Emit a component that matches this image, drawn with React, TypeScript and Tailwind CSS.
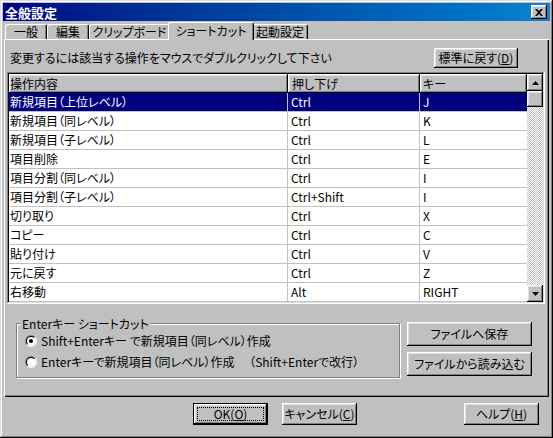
import { useId } from 'react'

const raised =
  'bg-[#c0c0c0] shadow-[inset_-1px_-1px_#000000,inset_1px_1px_#ffffff,inset_-2px_-2px_#808080,inset_2px_2px_#dfdfdf]'
const sunken =
  'shadow-[inset_-1px_-1px_#ffffff,inset_1px_1px_#808080,inset_-2px_-2px_#dfdfdf,inset_2px_2px_#000000]'

interface Shortcut {
  action: string
  modifier: string
  key: string
}

const shortcuts: Shortcut[] = [
  { action: '新規項目（上位レベル）', modifier: 'Ctrl', key: 'J' },
  { action: '新規項目（同レベル）', modifier: 'Ctrl', key: 'K' },
  { action: '新規項目（子レベル）', modifier: 'Ctrl', key: 'L' },
  { action: '項目削除', modifier: 'Ctrl', key: 'E' },
  { action: '項目分割（同レベル）', modifier: 'Ctrl', key: 'I' },
  { action: '項目分割（子レベル）', modifier: 'Ctrl+Shift', key: 'I' },
  { action: '切り取り', modifier: 'Ctrl', key: 'X' },
  { action: 'コピー', modifier: 'Ctrl', key: 'C' },
  { action: '貼り付け', modifier: 'Ctrl', key: 'V' },
  { action: '元に戻す', modifier: 'Ctrl', key: 'Z' },
  { action: '右移動', modifier: 'Alt', key: 'RIGHT' },
]

const tabs = [
  { label: '一般', w: 'w-[42px]' },
  { label: '編集', w: 'w-[42px]' },
  { label: 'クリップボード', w: 'w-[81px]' },
  { label: 'ショートカット', w: 'w-[86px]', active: true },
  { label: '起動設定', w: 'w-[56px]' },
]

function Radio({ checked }: { checked?: boolean }) {
  const id = useId().replace(/:/g, '')
  return (
    <svg width="12" height="12" viewBox="0 0 12 12" className="shrink-0">
      <defs>
        <linearGradient id={`o${id}`} x1="0" y1="0" x2="1" y2="1">
          <stop offset="0.5" stopColor="#808080" />
          <stop offset="0.5" stopColor="#ffffff" />
        </linearGradient>
        <linearGradient id={`i${id}`} x1="0" y1="0" x2="1" y2="1">
          <stop offset="0.5" stopColor="#000000" />
          <stop offset="0.5" stopColor="#dfdfdf" />
        </linearGradient>
      </defs>
      <circle cx="6" cy="6" r="6" fill={`url(#o${id})`} />
      <circle cx="6" cy="6" r="5" fill={`url(#i${id})`} />
      <circle cx="6" cy="6" r="4" fill="#ffffff" />
      {checked && <circle cx="6" cy="6" r="2" fill="#000000" />}
    </svg>
  )
}

function Arrow({ up }: { up?: boolean }) {
  return (
    <svg width="7" height="4" viewBox="0 0 7 4">
      <polygon points={up ? '3.5,0 7,4 0,4' : '0,0 7,0 3.5,4'} fill="#000000" />
    </svg>
  )
}

export default function App() {
  return (
    <div className="w-[553px] h-[438px] bg-[#c0c0c0] p-[3px] shadow-[inset_-1px_-1px_#000000,inset_1px_1px_#dfdfdf,inset_-2px_-2px_#808080,inset_2px_2px_#ffffff] font-['Noto_Sans_CJK_JP',sans-serif] [font-feature-settings:'palt'] text-[12px] text-black select-none">
      {/* title bar */}
      <div className="h-[18px] flex items-center justify-between pl-[2px] pr-[3px] bg-gradient-to-r from-[#000080] to-[#1084d0]">
        <span className="text-white font-bold text-[13px] leading-none">全般設定</span>
        <div className={`w-[16px] h-[14px] flex items-center justify-center ${raised}`}>
          <svg width="8" height="7" viewBox="0 0 8 7">
            <path d="M0 0h2l2 2 2-2h2L5 3.5 8 7H6L4 5 2 7H0l3-3.5z" fill="#000000" />
          </svg>
        </div>
      </div>

      {/* tabs */}
      <div className="h-[18px] flex items-end pl-[2px]">
        {tabs.map(t =>
          t.active ? (
            <div
              key={t.label}
              className={`${t.w} h-[18px] -mx-[2px] -mb-[1px] relative z-10 bg-[#c0c0c0] rounded-t-[3px] border-t border-l border-white border-r border-r-black shadow-[inset_-1px_0_#808080] flex items-start justify-center pt-[1px] leading-[14px]`}
            >
              {t.label}
            </div>
          ) : (
            <div
              key={t.label}
              className={`${t.w} h-[15px] bg-[#c0c0c0] rounded-t-[3px] border-t border-l border-white border-r border-r-black shadow-[inset_-1px_0_#808080] flex items-start justify-center leading-[14px]`}
            >
              {t.label}
            </div>
          )
        )}
      </div>

      {/* tab panel */}
      <div className="mx-[1px] h-[358px] bg-[#c0c0c0] shadow-[inset_1px_1px_#ffffff,inset_-1px_-1px_#000000,inset_-2px_-2px_#808080] flex flex-col">
        <div className="mt-[9px] h-[20px] flex items-center justify-between">
          <span className="ml-[6px] leading-none">変更するには該当する操作をマウスでダブルクリックして下さい</span>
          <div className={`mr-[31px] w-[84px] h-[20px] flex items-center justify-center leading-none ${raised}`}>
            標準に戻す(<span className="underline">D</span>)
          </div>
        </div>

        {/* list */}
        <div className={`mt-[4px] ml-[3px] w-[538px] h-[232px] p-[2px] bg-white flex ${sunken}`}>
          <div className="flex-1 flex flex-col">
            <div className="h-[19px] grid grid-cols-[279px_132px_1fr] leading-none">
              <div className={`flex items-center pl-[1px] ${raised}`}>操作内容</div>
              <div className={`flex items-center pl-[4px] ${raised}`}>押し下げ</div>
              <div className={`flex items-center pl-[3px] ${raised}`}>キー</div>
            </div>
            {shortcuts.map((s, i) => {
              const sel = i === 0
              return (
                <div
                  key={s.action}
                  className={`h-[19px] grid grid-cols-[279px_132px_1fr] border-b border-[#c0c0c0] leading-none ${sel ? 'bg-[#000080] text-white' : ''}`}
                >
                  <div className="flex items-center pl-[1px] border-r border-[#c0c0c0]">{s.action}</div>
                  <div className="flex items-center pl-[3px] border-r border-[#c0c0c0]">{s.modifier}</div>
                  <div className="flex items-center pl-[3px]">{s.key}</div>
                </div>
              )
            })}
          </div>
          {/* scrollbar */}
          <div className="w-[16px] flex flex-col">
            <div className={`h-[17px] flex items-center justify-center ${raised}`}>
              <Arrow up />
            </div>
            <div className={`h-[16px] ${raised}`} />
            <div className="flex-1 bg-[image:repeating-conic-gradient(#c0c0c0_0%_25%,#ffffff_0%_50%)] bg-[length:2px_2px]" />
            <div className={`h-[17px] flex items-center justify-center ${raised}`}>
              <Arrow />
            </div>
          </div>
        </div>

        {/* bottom section */}
        <div className="mt-[18px] ml-[12px] flex items-start">
          <div className="mt-[1px] w-[384px] h-[55px] relative border border-[#808080] shadow-[1px_1px_0_#ffffff,inset_1px_1px_0_#ffffff] flex flex-col gap-[7px] pt-[10px] pl-[8px]">
            <span className="absolute -top-[7px] left-[4px] px-[1px] bg-[#c0c0c0] leading-[13px]">
              Enterキー ショートカット
            </span>
            <div className="h-[14px] flex items-center gap-[4px] leading-none">
              <Radio checked />
              <span>Shift+Enterキー で新規項目（同レベル）作成</span>
            </div>
            <div className="h-[14px] flex items-center gap-[4px] leading-none">
              <Radio />
              <span>Enterキーで新規項目（同レベル）作成　 （Shift+Enterで改行）</span>
            </div>
          </div>
          <div className="ml-[7px] w-[125px] flex flex-col gap-[6px]">
            <div className={`h-[24px] flex items-center justify-center leading-none ${raised}`}>ファイルへ保存</div>
            <div className={`h-[24px] flex items-center justify-center leading-none ${raised}`}>ファイルから読み込む</div>
          </div>
        </div>
      </div>

      {/* dialog buttons */}
      <div className="mt-[6px] h-[22px] flex">
        <div className="ml-[190px] w-[75px] h-[22px] border border-black">
          <div className={`w-full h-full p-[3px] ${raised}`}>
            <div className="w-full h-full border border-dotted border-black flex items-center justify-center leading-none">
              OK(<span className="underline">O</span>)
            </div>
          </div>
        </div>
        <div className={`ml-[14px] w-[75px] h-[22px] flex items-center justify-center leading-none ${raised}`}>
          キャンセル(<span className="underline">C</span>)
        </div>
        <div className={`ml-auto mr-[11px] w-[75px] h-[22px] flex items-center justify-center leading-none ${raised}`}>
          ヘルプ(<span className="underline">H</span>)
        </div>
      </div>
    </div>
  )
}
